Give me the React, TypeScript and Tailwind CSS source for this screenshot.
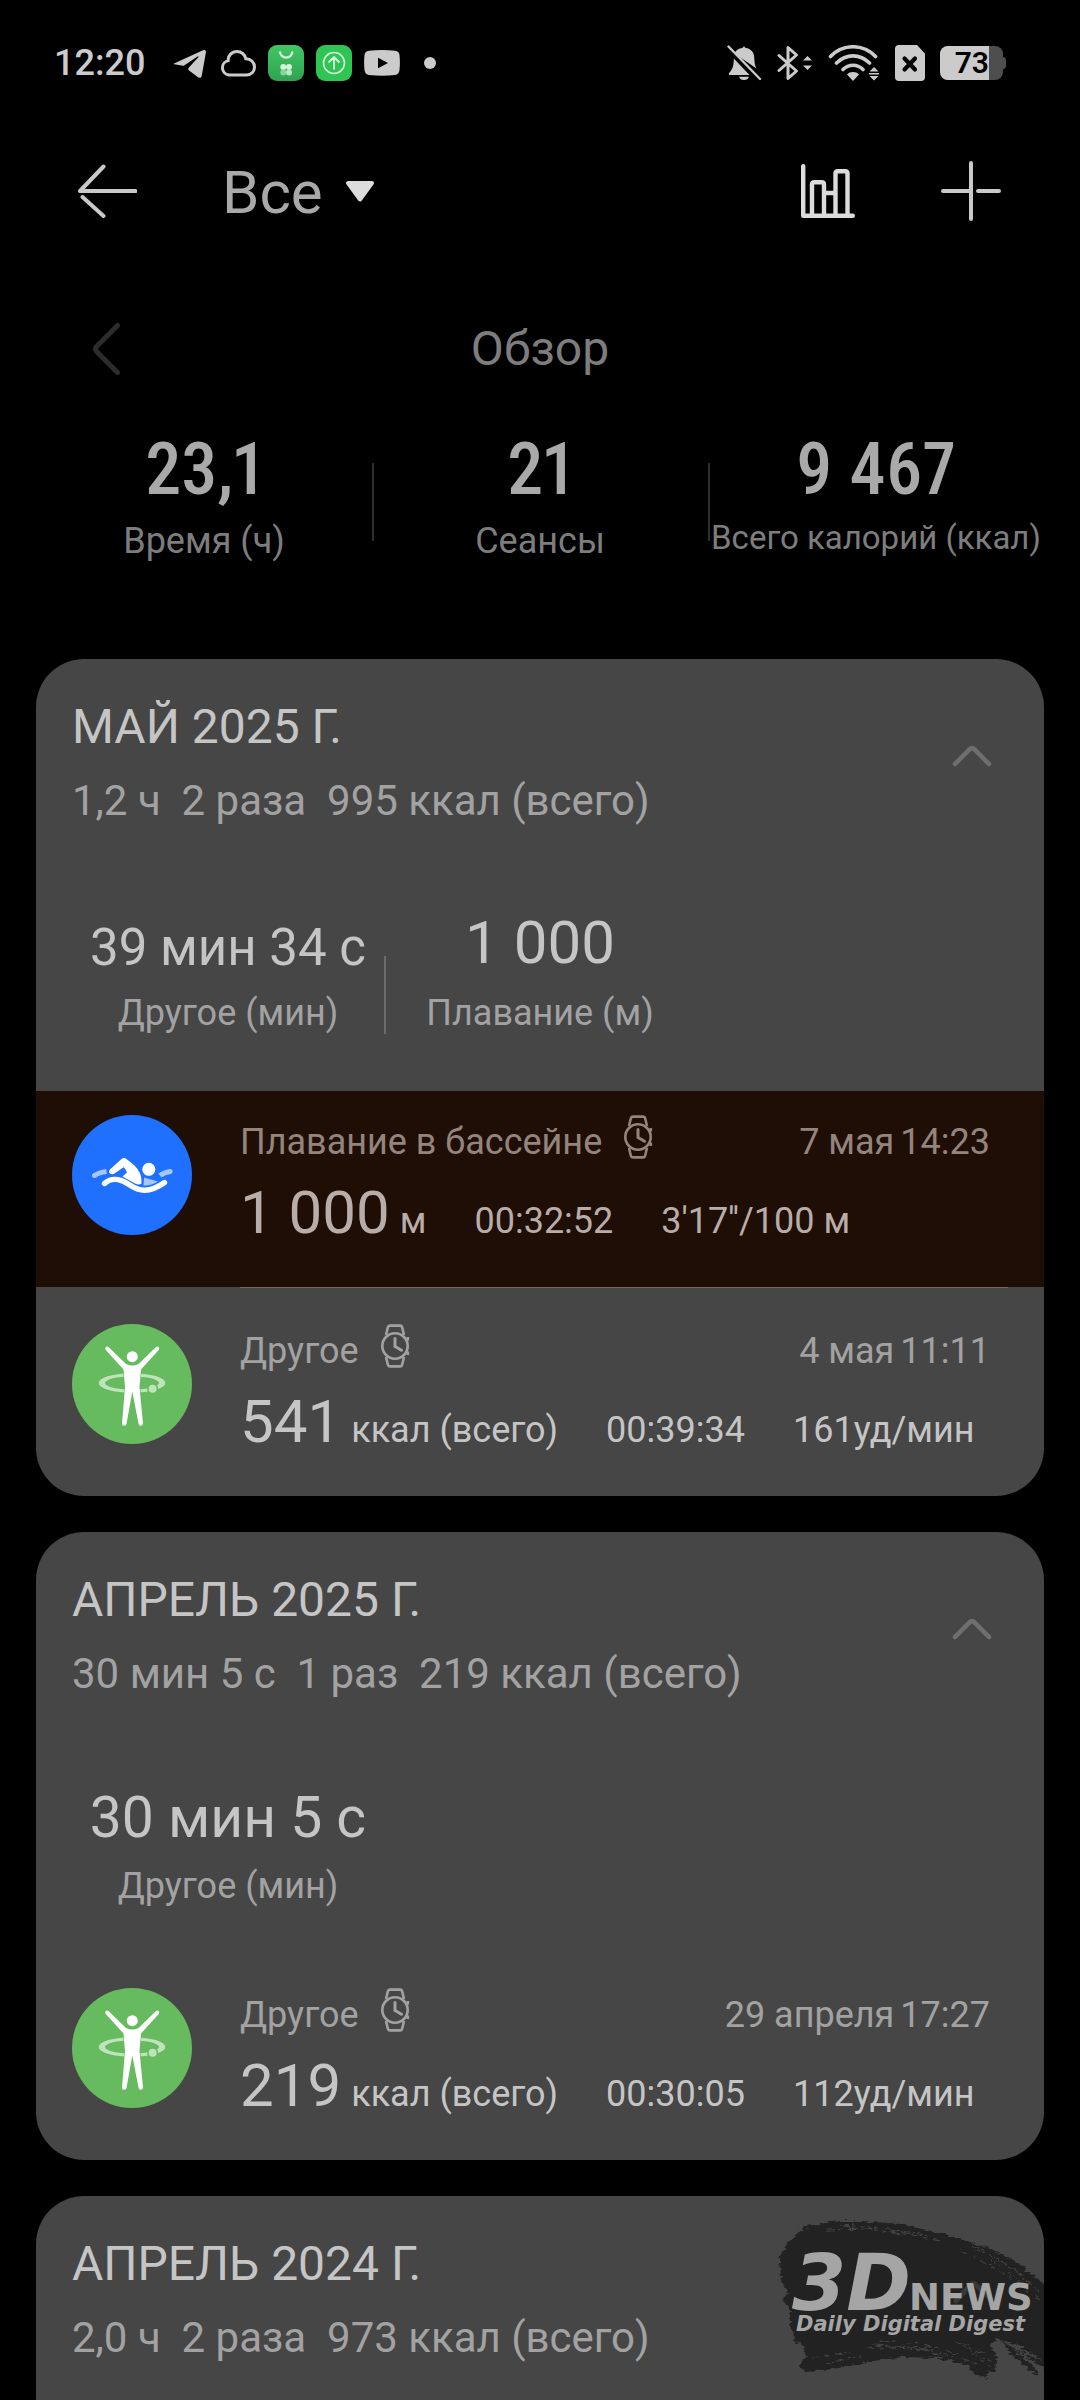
import { useState } from "react";
import clsx from "clsx";

type Workout = {
  id: string;
  kind: "swim" | "other";
  name: string;
  day: string;
  time: string;
  value: string;
  unit: string;
  duration: string;
  extra: string;
  highlighted?: boolean;
};

type Stat = { value: string; label: string; size: "sm" | "md" | "lg" };

type Month = {
  id: string;
  title: string;
  summary: string[];
  stats: Stat[];
  workouts: Workout[];
};

const OVERVIEW = [
  { value: "23,1", label: "Время (ч)" },
  { value: "21", label: "Сеансы" },
  { value: "9 467", label: "Всего калорий (ккал)", compact: true },
];

const MONTHS: Month[] = [
  {
    id: "2025-05",
    title: "МАЙ 2025 Г.",
    summary: ["1,2 ч", "2 раза", "995 ккал (всего)"],
    stats: [
      { value: "39 мин 34 с", label: "Другое (мин)", size: "sm" },
      { value: "1 000", label: "Плавание (м)", size: "lg" },
    ],
    workouts: [
      {
        id: "w1",
        kind: "swim",
        name: "Плавание в бассейне",
        day: "7 мая",
        time: "14:23",
        value: "1 000",
        unit: "м",
        duration: "00:32:52",
        extra: "3'17''/100 м",
        highlighted: true,
      },
      {
        id: "w2",
        kind: "other",
        name: "Другое",
        day: "4 мая",
        time: "11:11",
        value: "541",
        unit: "ккал (всего)",
        duration: "00:39:34",
        extra: "161уд/мин",
      },
    ],
  },
  {
    id: "2025-04",
    title: "АПРЕЛЬ 2025 Г.",
    summary: ["30 мин 5 с", "1 раз", "219 ккал (всего)"],
    stats: [{ value: "30 мин 5 с", label: "Другое (мин)", size: "md" }],
    workouts: [
      {
        id: "w3",
        kind: "other",
        name: "Другое",
        day: "29 апреля",
        time: "17:27",
        value: "219",
        unit: "ккал (всего)",
        duration: "00:30:05",
        extra: "112уд/мин",
      },
    ],
  },
  {
    id: "2024-04",
    title: "АПРЕЛЬ 2024 Г.",
    summary: ["2,0 ч", "2 раза", "973 ккал (всего)"],
    stats: [],
    workouts: [],
  },
];

/* Status bar */
function StatusBar() {
  return (
    <div className="flex h-[46px] items-center justify-between pr-[74px] pl-[54px] text-[#cbcbcb]">
      <div className="flex items-center gap-3">
        <span className="mr-[15px] text-4xl font-medium">12:20</span>
        <svg className="size-9" viewBox="0 0 36 36" fill="currentColor">
          <path d="M2 18.5 31 5.2c2-.9 3.300 .2 2.900 2.200l-4.200 23.500c-.4 1.900-2 2.500-3.600 1.300L17 25.500c-1-.8-1-1.900-.1-2.900l9.500-10.300c.6-.7-.1-1.200-.9-.7L12.500 20.200c-1 .6-1.900.7-3 .4l-7-1.300c-.8-.2-.9-.5-.5-.8z" />
        </svg>
        <svg className="size-9" viewBox="0 0 36 36" fill="none" stroke="currentColor" strokeWidth="3">
          <path d="M9 30a7.300 7.300 0 0 1-.8-14.400C7.800 10.500 12 6.500 17 6.500c4.300 0 8 3 8.800 7.200C30.500 13.500 34.500 17.300 34.500 22s-3.500 8-8 8z" />
        </svg>
        <svg className="size-9" viewBox="0 0 36 36" fill="none">
          <defs>
            <linearGradient id="appGreen" x1="0" y1="0" x2="0" y2="1">
              <stop offset="0" stopColor="#41c665" />
              <stop offset="1" stopColor="#2fa350" />
            </linearGradient>
          </defs>
          <rect width="36" height="36" rx="9" fill="url(#appGreen)" />
          <path d="M12 6.500a6.200 6.200 0 0 0 12.400 0" stroke="#d5f5dc" strokeWidth="2.200" />
          <circle cx="15.300" cy="22" r="3" fill="#d5f5dc" />
          <circle cx="21" cy="22" r="3" fill="#d5f5dc" />
          <circle cx="15.300" cy="27.500" r="3" fill="#8bd49d" />
          <circle cx="21" cy="27.500" r="3" fill="#b9e8c4" />
        </svg>
        <svg className="size-9" viewBox="0 0 36 36" fill="none" stroke="#d5f5dc" strokeWidth="1.600">
          <rect width="36" height="36" rx="9" fill="#2fc552" stroke="none" />
          <circle cx="18" cy="18" r="10.500" />
          <path d="M18 24.500V12.500M12.500 17.500l5.500-5.300 5.500 5.300" strokeWidth="2" />
        </svg>
        <svg className="size-9" viewBox="0 0 36 36" fill="currentColor">
          <path
            fillRule="evenodd"
            d="M5 5.700Q18 4.300 31 5.700 35 6 35.500 10 36.300 18 35.500 25 35 29.500 31 30 18 31.300 5 30 1 29.500.5 25-.3 18 .5 10 1 6 5 5.700zM14 12.800v10.400l10-5.200z"
          />
        </svg>
        <span className="ml-3 size-3 rounded-full bg-[#cbcbcb]" />
      </div>

      <div className="flex items-center gap-[15px]">
        <svg className="size-9" viewBox="0 0 36 36" fill="currentColor">
          <path d="M8.500 8.500C9.500 5.500 13 3.200 16.300 3L18 1.300 19.700 3c5.300.5 8.300 4.500 8.500 9 .2 5 .5 8.500 2.300 11.500z" />
          <path d="M7.800 13.500 23.500 30H4c-1.500 0-1.500-1.300-.7-2.300C7.200 23.500 7.700 20 7.800 13.500zM13 31.700h10c-.6 2-2.400 3.300-5 3.300s-4.400-1.300-5-3.300z" />
          <path d="M2.500 1.500 34 34" stroke="currentColor" strokeWidth="2.400" strokeLinecap="round" />
        </svg>
        <svg className="size-9" viewBox="0 0 36 36" fill="none" stroke="currentColor" strokeWidth="3" strokeLinejoin="round" strokeLinecap="round">
          <path d="M2 10.500 19.500 26 11 33.500V2.500L19.500 10 2 25.500" />
          <path d="M26 15.500 30.500 11 35 15.500zM26 20.500 30.500 25 35 20.500z" fill="currentColor" stroke="none" />
        </svg>
        <svg className="h-9 w-[52px]" viewBox="0 0 52 36" fill="none" stroke="currentColor" strokeWidth="3.600" strokeLinecap="round">
          <path d="M2.500 11.500C15-1.500 35-1.500 47.500 11.500M8.500 18c9.500-9.500 23.500-9.500 33 0M15 24.500c5.700-5.700 14.300-5.700 20 0" />
          <path d="M25 36l-6-6.500c2.500-3.300 9.500-3.300 12 0zM41.500 26.500 46 22l4.500 4.500zM41.500 31 46 35.500 50.500 31z" fill="currentColor" stroke="none" />
          <path d="M41.500 28.800h9" strokeWidth="1.500" />
        </svg>
        <svg className="h-9 w-[30px]" viewBox="0 0 30 36">
          <path d="M4 0h18l8 8.500V32a4 4 0 0 1-4 4H4a4 4 0 0 1-4-4V4a4 4 0 0 1 4-4z" fill="currentColor" />
          <path d="M9.500 13.500 20 24.500M20 13.500 9.500 24.500" stroke="#000" strokeWidth="4.200" strokeLinecap="round" />
        </svg>
        <div className="flex items-center">
          <div className="flex h-[34px] w-[63px] overflow-hidden rounded-lg bg-[#4e4e4e]">
            <span className="w-[49px] bg-[#cbcbcb] text-right text-3xl leading-[34px] font-semibold text-black">73</span>
          </div>
          <span className="h-3 w-[3px] rounded-r bg-[#4e4e4e]" />
        </div>
      </div>
    </div>
  );
}

function Header() {
  const [filter, setFilter] = useState("all");

  return (
    <header className="mt-[57px] flex h-24 items-center pr-[79px] pl-[77px]">
      <button type="button" aria-label="Назад">
        <svg width="60" height="60" viewBox="0 0 60 60" fill="none" stroke="#c9c9c9" strokeWidth="4" strokeLinecap="round" strokeLinejoin="round">
          <path d="M26.500 5.500 3 30h55.500M5.500 36 26.500 55" />
        </svg>
      </button>
      <label className="ml-[85px] flex items-center gap-[22px]">
        <select
          aria-label="Тип тренировки"
          value={filter}
          onChange={(e) => setFilter(e.target.value)}
          className="appearance-none bg-transparent pt-1 text-6xl leading-[72px] text-[#a9a9a9] outline-none"
        >
          <option value="all">Все</option>
        </select>
        <svg className="pointer-events-none" width="30" height="22" viewBox="0 0 30 22">
          <path d="M3 3h24L15 19.500z" fill="#dcdcdc" stroke="#dcdcdc" strokeWidth="4" strokeLinejoin="round" />
        </svg>
      </label>
      <button type="button" aria-label="Статистика" className="ml-auto">
        <svg width="54" height="54" viewBox="0 0 54 54" fill="none" stroke="#dcdcdc" strokeWidth="4.400" strokeLinecap="round" strokeLinejoin="round">
          <path d="M2.200 2.200v49.600h49.600" />
          <path d="M11 51V20.500q0-2.300 2.300-2.300h7.400q2.300 0 2.300 2.300V51M23 29h11.500M34.500 51V9.500q0-2.300 2.300-2.300h7.400q2.300 0 2.300 2.300V51" />
        </svg>
      </button>
      <button type="button" aria-label="Добавить" className="ml-[86px]">
        <svg width="60" height="60" viewBox="0 0 60 60" fill="none" stroke="#c9c9c9" strokeWidth="4" strokeLinecap="round">
          <path d="M30 2v56M2 30h28M37 30h21" />
        </svg>
      </button>
    </header>
  );
}

function Overview() {
  return (
    <section className="mt-[72px]">
      <div className="grid h-[76px] grid-cols-3 items-center px-9">
        <button type="button" aria-label="Предыдущий период" className="ml-14 justify-self-start">
          <svg width="30" height="54" viewBox="0 0 30 54" fill="none" stroke="#2c2c2c" strokeWidth="5" strokeLinecap="round" strokeLinejoin="round">
            <path d="M25.500 3.500 4.500 24.500q-2 2.500 0 5L25.500 50.500" />
          </svg>
        </button>
        <h1 className="text-center text-5xl text-[#7d7d7d]">Обзор</h1>
      </div>
      <div className="mt-[47px] grid grid-cols-3 px-9">
        {OVERVIEW.map((item, i) => (
          <div key={item.label} className="flex items-end">
            <div className="flex-1 text-center">
              <p className="font-['Roboto_Condensed','Roboto',sans-serif] text-7xl leading-[72px] font-medium text-[#a9a9a9] proportional-nums">
                {item.value}
              </p>
              <p
                className={clsx(
                  "mt-[11px] h-12 whitespace-nowrap text-[#7d7d7d]",
                  item.compact ? "text-[33px] leading-[42px]" : "text-4xl leading-[48px]",
                )}
              >
                {item.label}
              </p>
            </div>
            {i < OVERVIEW.length - 1 && <span className="-mr-0.5 mb-6 h-[78px] w-0.5 bg-[#2e2e2e]" />}
          </div>
        ))}
      </div>
    </section>
  );
}

/* Icons */
function WatchIcon() {
  return (
    <svg className="shrink-0" width="30" height="44" viewBox="0 0 30 44" fill="none" stroke="currentColor" strokeWidth="2.600" strokeLinejoin="round">
      <circle cx="14" cy="22" r="12.700" />
      <path d="M5 11 6.800 3.500Q7.300 1.600 9 1.600h10q1.700 0 2.200 1.900L23 11M5 33l1.800 7.500q.5 1.900 2.200 1.900h10q1.700 0 2.200-1.900L23 33" />
      <path d="M26.800 13v3.500M26.800 27.500V31" />
      <path d="M14 14.500v8l6.500 3.800" strokeWidth="3" strokeLinecap="round" />
    </svg>
  );
}

function SwimIcon() {
  return (
    <svg className="size-30 shrink-0" viewBox="0 0 120 120" fill="none" strokeLinecap="round">
      <circle cx="60" cy="60" r="60" fill="#1f70ff" />
      <path d="M22.500 60.500Q27 57.500 34.500 56.500M88 60.500Q92 57.500 98.500 56.500" stroke="#a5c6ff" strokeWidth="5" strokeLinecap="butt" />
      <path d="M22.500 60.500h.1M98 56.600h.1" stroke="#a5c6ff" strokeWidth="5" />
      <path d="M72 62.500 86 66.500Q79 71 71.500 70.500z" fill="#a5c6ff" />
      <path
        d="M38 58.500Q36 57 38 54.500L49.500 44Q52 42 54.500 44L62 50Q70.500 58 69.500 68.500 67 70.500 63 68.500L50.500 61.500 55 57.500Q54 54 51.500 52.300L42.500 58.500Q40 60 38 58.500z"
        fill="#fff"
      />
      <circle cx="76.800" cy="54.300" r="6.500" fill="#fff" />
      <path d="M32.500 68.500C39 62.500 48 63.500 57 69.500 67 76.500 77 78.500 92.500 67.500" stroke="#fff" strokeWidth="5.400" />
    </svg>
  );
}

function OtherIcon() {
  return (
    <svg className="size-30 shrink-0" viewBox="0 0 120 120" fill="none" strokeLinecap="round">
      <circle cx="60" cy="60" r="60" fill="#66bb5e" />
      <path
        fillRule="evenodd"
        d="M26.700 59a33.300 9.800 0 1 0 66.600 0a33.300 9.800 0 1 0-66.600 0zM33 59a27 6.600 0 1 0 54 0a27 6.600 0 1 0-54 0z"
        fill="#bfe3bb"
      />
      <circle cx="80.600" cy="64.700" r="4.800" fill="#bfe3bb" stroke="#66bb5e" strokeWidth="1.600" />
      <path
        d="M33.500 23.500q1.500-2.200 3.500 0L54 40q6 3 12.600 0L83.500 23.500q2-2.200 3.500 0 .6 1.300-.3 2.600L69 45.500 67.500 63 71 99.500q-.3 2.500-2.200 2.300-1.800.2-2.200-1.800L60.300 67.500 54.500 100q-.5 2-2.300 1.800-2 .2-2.200-2.300L53 63 51.500 45.500 33.800 26.100q-.9-1.300-.3-2.600z"
        fill="#fff"
        stroke="#66bb5e"
        strokeWidth="1.200"
        paintOrder="stroke"
      />
      <circle cx="60.300" cy="32.700" r="5.500" fill="#fff" />
    </svg>
  );
}

/* Site mark over the last card */
function NewsMark() {
  return (
    <svg className="absolute top-0 right-0" width="304" height="204" viewBox="0 0 304 204">
      <defs>
        <filter id="bristle" x="0" y="0" width="1" height="1" filterUnits="objectBoundingBox">
          <feTurbulence type="fractalNoise" baseFrequency="0.12 0.4" numOctaves="2" seed="4" result="noise" />
          <feDisplacementMap in="SourceGraphic" in2="noise" scale="7" xChannelSelector="R" yChannelSelector="G" />
        </filter>
      </defs>
      <g filter="url(#bristle)">
        <path d="M0 0h304v204H0z" fill="none" />
        <g fill="#232323">
          <path d="M64 31 90 26 122 25 160 28 205 38 245 51 275 66 310 92V170L292 158 275 148 256 143 250 150 258 162 254 176 230 170 200 162 165 161 140 164 100 172 66 176 60 170 66 160 62 150 54 144 50 130 50 112 43 104 48 96 41 84 40 60 46 50 52 42z" />
          <path d="M260 145 304 166 304 172 276 154zM262 144 298 174 296 179 272 160zM228 166 248 174 247 183 230 175z" />
          <path d="M66 30 100 25 130 25 110 28zM280 66 300 90 296 91zM245 50 280 68 304 92 290 88z" />
        </g>
        <g stroke="#464646" strokeWidth="1" fill="none" strokeDasharray="9 3 4 6">
          <path d="M86 34 130 33 160 38M100 29 150 33 190 40M150 34 200 45M220 54 258 74 300 104M240 53 280 78 302 98M250 62 284 88M232 50 270 70 304 100" />
          <path d="M140 145 180 148 220 158M128 153 170 150 212 162M134 149 190 154 240 168M216 146 246 158M224 150 252 166M230 156 252 172M270 148 300 170M72 162 110 156M86 168 120 160" />
        </g>
      </g>
      <path d="M216 105 230 89q3-3 6 0l15 14" stroke="#383838" strokeWidth="5" strokeLinecap="round" fill="none" />
      <g fill="#a5a5a5" fontFamily="DejaVu Sans" fontWeight="700">
        <text x="52" y="114" fontSize="78" fontStyle="italic">3D</text>
        <text x="169" y="114" fontSize="37">NEWS</text>
        <text x="56" y="135" fontSize="21" fontStyle="italic">Daily Digital Digest</text>
      </g>
    </svg>
  );
}

function WorkoutRow({ workout, last }: { workout: Workout; last: boolean }) {
  const muted = workout.highlighted ? "text-[#93847d]" : "text-[#a2a2a2]";
  const strong = workout.highlighted ? "text-[#b8ada9]" : "text-[#c5c5c5]";

  return (
    <li className={clsx(!last && "mb-3")}>
      <div className={clsx("flex gap-12 pt-6 pr-[54px] pb-[38px] pl-9", workout.highlighted && "bg-[#1f0e05]")}>
        {workout.kind === "swim" ? <SwimIcon /> : <OtherIcon />}
        <div className="min-w-0 flex-1">
          <div className={clsx("flex h-[54px] items-start text-4xl leading-[54px]", muted)}>
            <span className="mr-[22px]">{workout.name}</span>
            <WatchIcon />
            <time className="ml-auto flex gap-1.5">
              <span>{workout.day}</span>
              <span>{workout.time}</span>
            </time>
          </div>
          <div className={clsx("mt-2 flex items-baseline text-4xl leading-[48px] whitespace-nowrap", strong)}>
            <span className="text-6xl leading-[72px]">{workout.value}</span>
            <span className="ml-2.5">{workout.unit}</span>
            <span className="ml-12">{workout.duration}</span>
            <span className="ml-12">{workout.extra}</span>
          </div>
        </div>
      </div>
      {!last && <div className="mr-9 ml-[204px] h-px bg-[#75675f]" />}
    </li>
  );
}

function MonthCard({ month, last }: { month: Month; last: boolean }) {
  const [open, setOpen] = useState(true);

  return (
    <section
      className={clsx(
        "relative overflow-hidden bg-[#464646]",
        last ? "flex-1 rounded-t-[48px]" : "rounded-[48px]",
      )}
    >
      <div className="flex items-start justify-between px-9 pt-10">
        <div>
          <h2 className="text-5xl leading-[56px] text-[#c5c5c5]">{month.title}</h2>
          <p className="mt-[18px] text-[42px] leading-[56px] whitespace-pre text-[#a2a2a2]">{month.summary.join("  ")}</p>
        </div>
        <button type="button" aria-label="Свернуть" aria-expanded={open} onClick={() => setOpen(!open)} className="mt-[46px] mr-4">
          <svg width="40" height="22" viewBox="0 0 40 22" fill="none" stroke="#6e6e6e" strokeWidth="4.600" strokeLinecap="round" strokeLinejoin="round">
            <path d="M3 19 17.500 4.300q2.500-2.200 5 0L37 19" />
          </svg>
        </button>
      </div>

      {open && month.stats.length > 0 && (
        <div className="mt-[79px] grid grid-cols-3 items-end px-9 pb-[54px]">
          {month.stats.map((stat, i) => (
            <div key={stat.label} className="flex items-end">
              <div className="flex-1 text-center">
                <p
                  className={clsx(
                    "whitespace-nowrap text-[#c5c5c5]",
                    stat.size === "sm" && "text-[51px] leading-[60px]",
                    stat.size === "md" && "pt-1 text-[57px] leading-[66px]",
                    stat.size === "lg" && "text-6xl leading-[70px]",
                  )}
                >
                  {stat.value}
                </p>
                <p className="mt-[11px] text-4xl leading-[48px] text-[#a2a2a2]">{stat.label}</p>
              </div>
              {i < month.stats.length - 1 && <span className="-mr-0.5 mb-[3px] h-[78px] w-0.5 bg-[#6b6b6b]" />}
            </div>
          ))}
        </div>
      )}

      {open && (
        <ul>
          {month.workouts.map((workout, i) => (
            <WorkoutRow key={workout.id} workout={workout} last={i === month.workouts.length - 1} />
          ))}
        </ul>
      )}

      {last && <NewsMark />}
    </section>
  );
}

export default function App() {
  return (
    <div className="flex min-h-screen flex-col bg-black pt-10 font-['Roboto',sans-serif]">
      <StatusBar />
      <Header />
      <Overview />
      <main className="mt-[94px] flex flex-1 flex-col gap-9 px-9">
        {MONTHS.map((month, i) => (
          <MonthCard key={month.id} month={month} last={i === MONTHS.length - 1} />
        ))}
      </main>
    </div>
  );
}
